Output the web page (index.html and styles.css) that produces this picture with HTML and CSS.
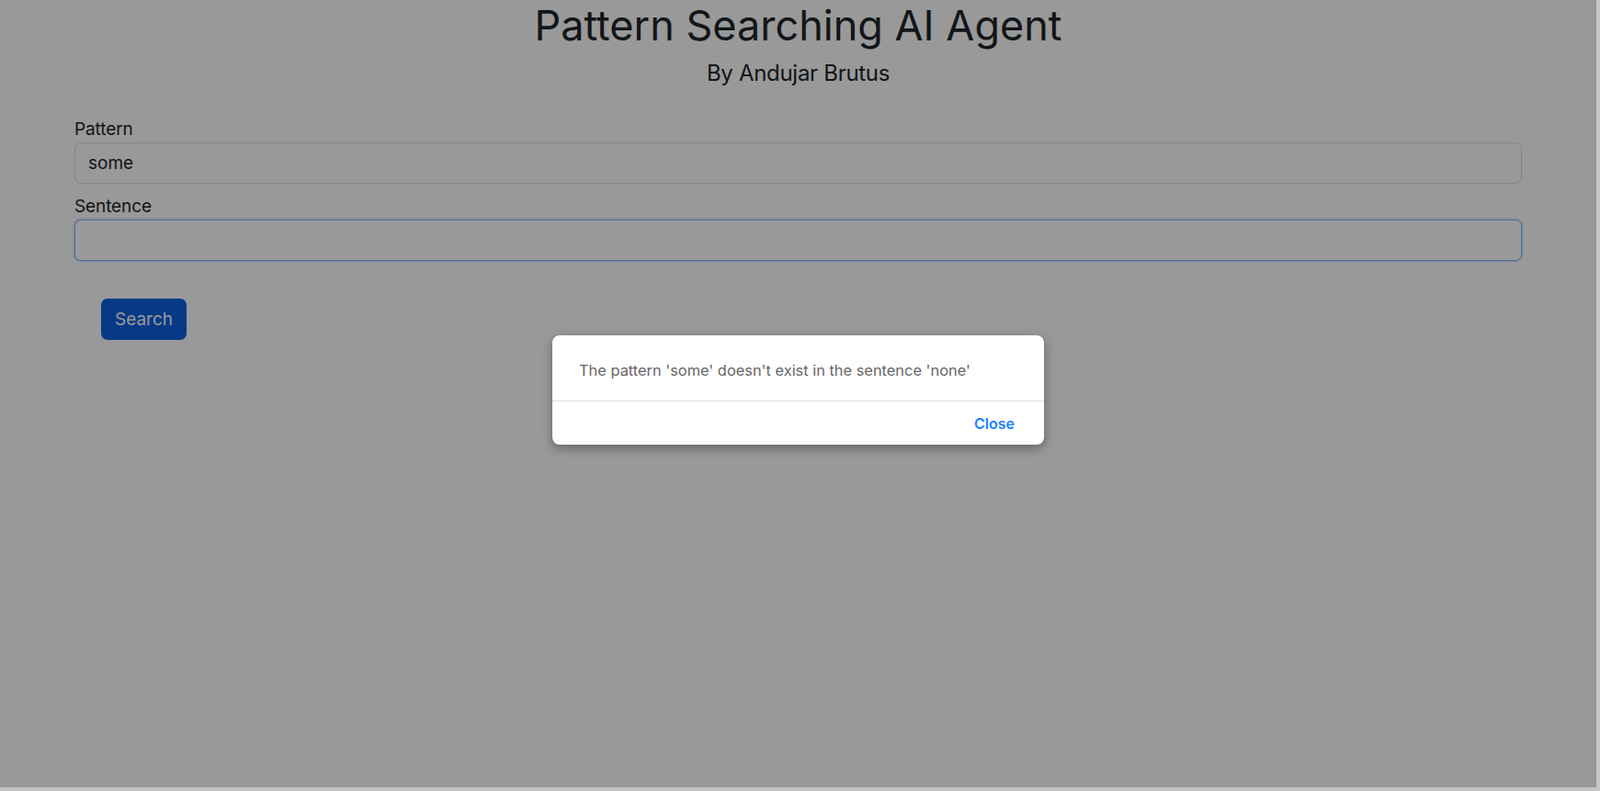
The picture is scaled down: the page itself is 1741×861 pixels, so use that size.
FILE: index.html
```html
<!DOCTYPE html>
<html lang="en">
<head>
<meta charset="utf-8">
<title>Pattern Searching AI Agent</title>
<link rel="stylesheet" href="styles.css">
</head>
<body>
<div class="screen">
  <main class="app">
    <header class="heading">
      <h1 class="title">Pattern Searching AI Agent</h1>
      <h2 class="subtitle">By Andujar Brutus</h2>
    </header>
    <form class="form">
      <div class="field">
        <label class="label" for="pattern">Pattern</label>
        <input class="input" id="pattern" type="text" value="some">
      </div>
      <div class="field">
        <label class="label" for="sentence">Sentence</label>
        <input class="input input-focus" id="sentence" type="text" value="">
      </div>
      <div class="actions">
        <button class="btn" type="button">Search</button>
      </div>
    </form>
  </main>
  <div class="backdrop">
    <div class="dialog">
      <p class="dialog-text">The pattern 'some' doesn't exist in the sentence 'none'</p>
      <div class="dialog-footer">
        <button class="dialog-btn" type="button">Close</button>
      </div>
    </div>
  </div>
</div>
</body>
</html>
```

FILE: styles.css
```css
html, body {
  margin: 0;
  padding: 0;
  background: #c6c6c6;
}

.screen {
  position: relative;
  width: 1737px;
  height: 857px;
  background: #ffffff;
  overflow: hidden;
  font-family: Inter, "Liberation Sans", sans-serif;
  color: #212529;
}

.app {
  padding: 0 81px;
}

.heading {
  text-align: center;
}

.title {
  margin: 0;
  padding-top: 2px;
  font-size: 45px;
  font-weight: 400;
  line-height: 52px;
  letter-spacing: 0;
}

.subtitle {
  margin: 10px 0 0;
  font-size: 24px;
  font-weight: 400;
  line-height: 32px;
  letter-spacing: -0.3px;
}

.form {
  margin-top: 31px;
}

.field {
  margin-bottom: 11px;
}

.label {
  display: block;
  font-size: 19px;
  line-height: 28px;
  letter-spacing: -0.1px;
}

.input {
  display: block;
  box-sizing: border-box;
  width: 100%;
  height: 45px;
  padding: 0 14px;
  border: 1.5px solid #d9dcdf;
  border-radius: 7px;
  font-family: inherit;
  font-size: 19px;
  color: #212529;
  background: #fff;
  outline: none;
}

.input-focus {
  border-color: #86b7fe;
  box-shadow: 0 0 0 1.5px rgba(13, 110, 253, 0.18);
}

.actions {
  padding: 30px 0 0 29px;
}

.btn {
  height: 45px;
  padding: 0 15px;
  border: none;
  border-radius: 7px;
  background: #0d62e0;
  color: #ffffff;
  font-family: inherit;
  font-size: 19px;
}

.backdrop {
  position: absolute;
  inset: 0;
  background: rgba(0, 0, 0, 0.4);
  display: flex;
  justify-content: center;
  align-items: flex-start;
  padding-top: 365px;
  box-sizing: border-box;
}

.dialog {
  width: 535px;
  background: #ffffff;
  border-radius: 8px;
  box-shadow: 0 4px 12px rgba(0, 0, 0, 0.35);
}

.dialog-text {
  margin: 0;
  padding: 26px 28px 0 29px;
  height: 72px;
  box-sizing: border-box;
  border-bottom: 1px solid #dcdcdc;
  font-size: 16.4px;
  line-height: 24px;
  color: #666666;
}

.dialog-footer {
  display: flex;
  justify-content: flex-end;
  padding: 0 32px 0 0;
  height: 47px;
  align-items: center;
}

.dialog-btn {
  border: none;
  background: none;
  padding: 0;
  font-family: inherit;
  font-size: 16px;
  font-weight: 600;
  color: #1a82fb;
}
```
